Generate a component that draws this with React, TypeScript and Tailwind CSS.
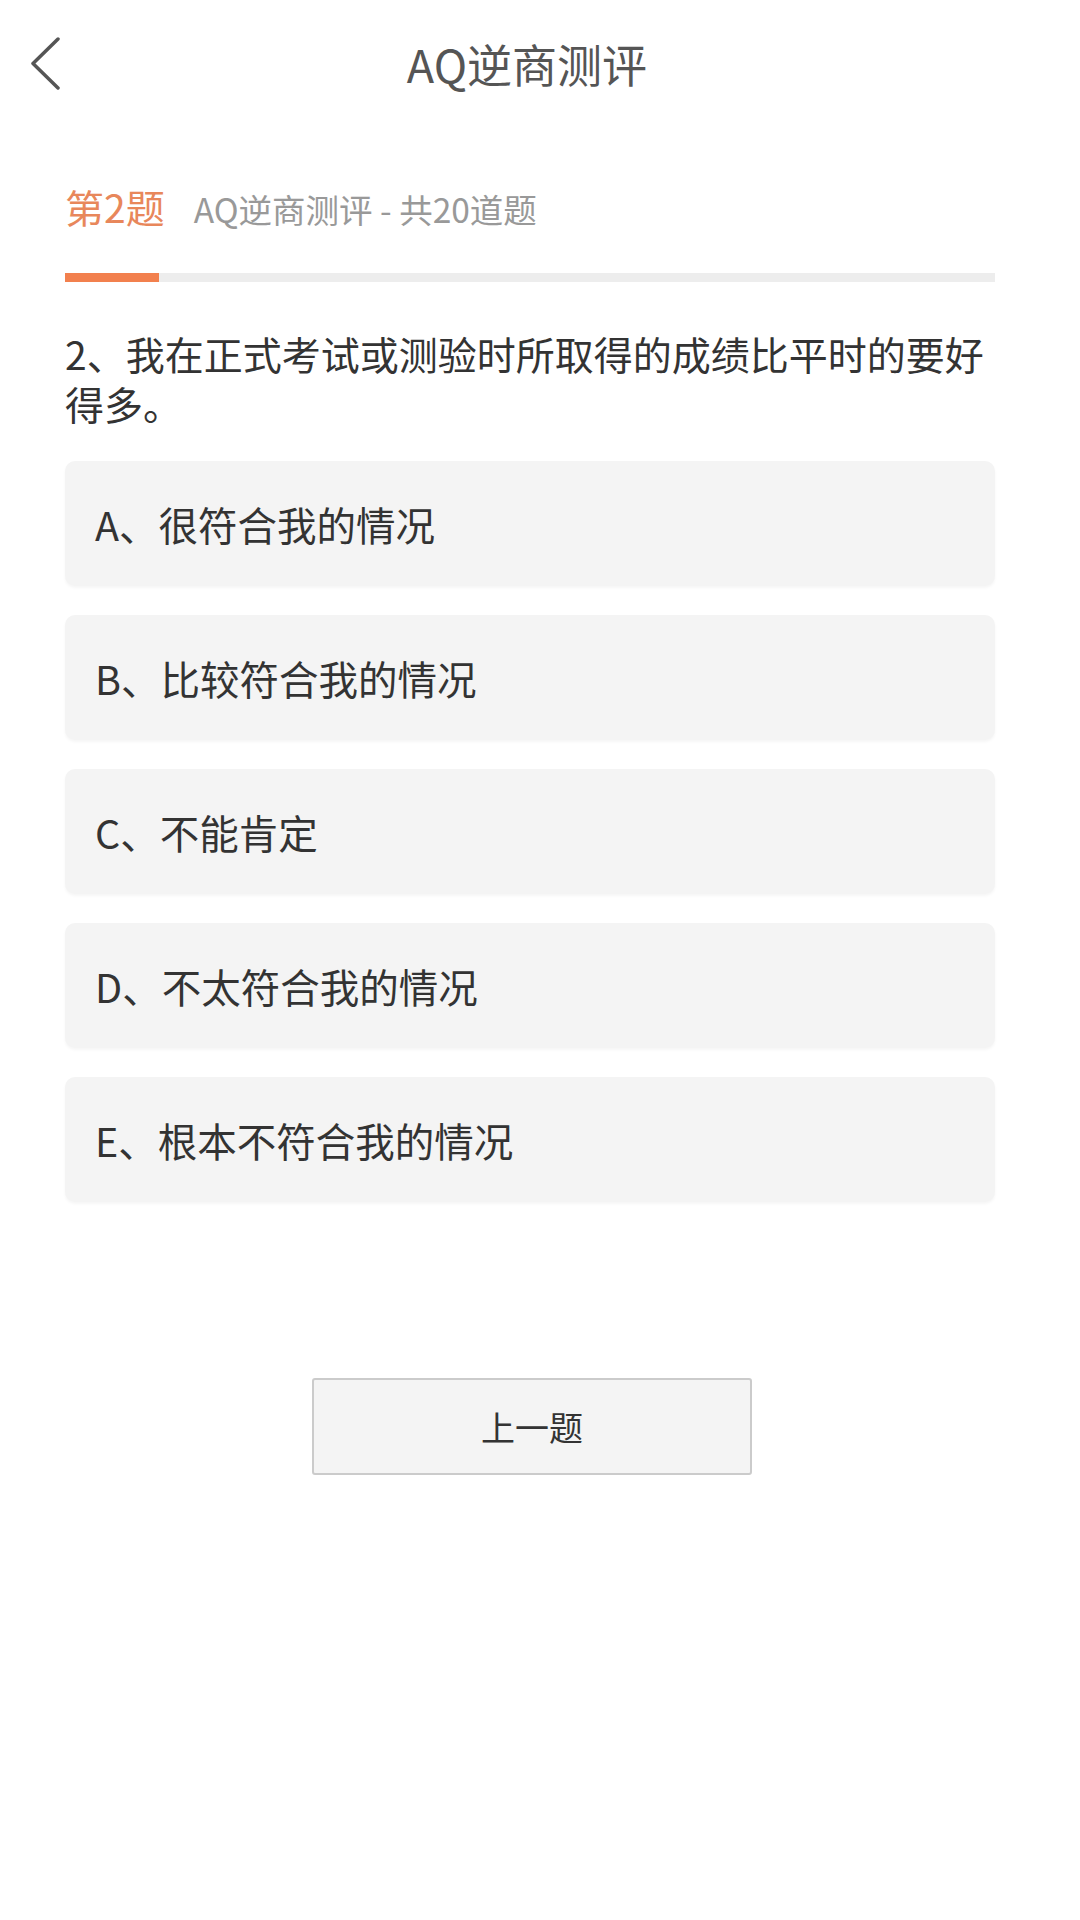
import React from "react";

const options = [
  "A、很符合我的情况",
  "B、比较符合我的情况",
  "C、不能肯定",
  "D、不太符合我的情况",
  "E、根本不符合我的情况",
];

const font = { fontFamily: '"Noto Sans CJK SC", "Noto Sans", sans-serif' };

export default function App() {
  return (
    <div className="w-[1080px] min-h-[1920px] bg-white" style={font}>
      {/* nav bar */}
      <div className="flex h-[126px] items-center">
        <div className="w-[100px] pl-[30px]">
          <svg width="32" height="54" viewBox="0 0 32 54" fill="none">
            <path d="M28 3 L3 27.5 L28 52" stroke="#555" strokeWidth="3.5" strokeLinecap="round" strokeLinejoin="round" />
          </svg>
        </div>
        <h1 className="flex-1 text-center text-[45px] leading-none text-[#555]">AQ逆商测评</h1>
        <div className="w-[126px]" />
      </div>

      <div className="ml-[65px] w-[930px]">
        <div className="mt-[60px] flex items-baseline gap-[29px]">
          <span className="text-[39px] leading-[40px] text-[#e8875b]">第2题</span>
          <span className="text-[33.5px] leading-[40px] text-[#999]">AQ逆商测评 - 共20道题</span>
        </div>

        <div className="mt-[44px] h-[9px] w-full bg-[#ededed]">
          <div className="h-full w-[94px] bg-[#f2804e]" />
        </div>

        <p className="mt-[46px] text-[39px] leading-[50px] text-[#333]">
          2、我在正式考试或测验时所取得的成绩比平时的要好得多。
        </p>

        <div className="mt-[33px] flex flex-col gap-[29px]">
          {options.map((o) => (
            <div
              key={o}
              className="flex h-[125px] items-center rounded-[10px] bg-[#f4f4f4] pl-[30px] text-[39.5px] leading-none text-[#333] shadow-[0_2px_3px_rgba(0,0,0,0.04)]"
            >
              {o}
            </div>
          ))}
        </div>

        <button className="ml-[247px] mt-[176px] flex h-[97px] w-[440px] items-center justify-center rounded-[3px] border-2 border-[#cbcbcb] bg-[#f4f4f4] text-[34px] leading-none text-[#333]">
          上一题
        </button>
      </div>
    </div>
  );
}
